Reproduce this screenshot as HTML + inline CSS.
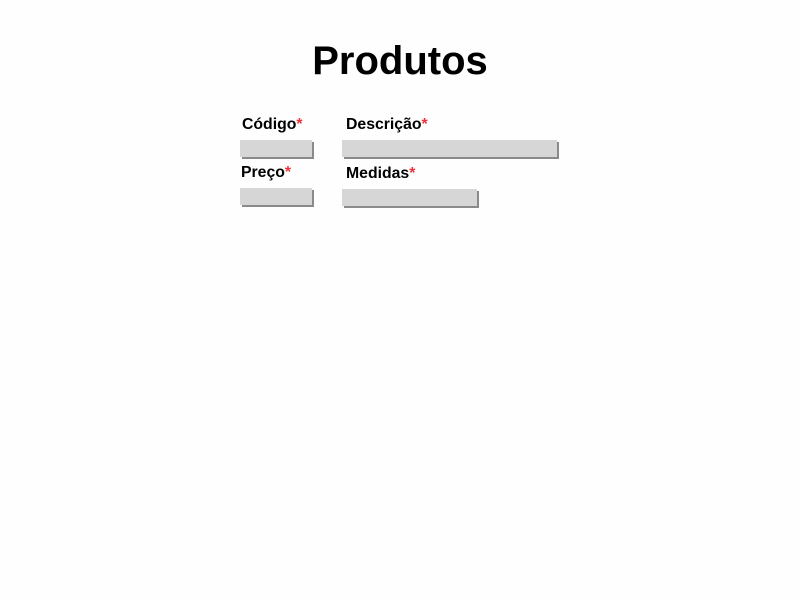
<!DOCTYPE html>
<html><head><meta charset="utf-8"><style>
body{margin:0;width:800px;height:600px;background:#fefefe;font-family:"Liberation Sans",sans-serif;position:relative;overflow:hidden}
h1{position:absolute;top:38px;left:0;width:800px;text-align:center;margin:0;font-size:40px;line-height:46px;font-weight:bold;color:#000}
.l{position:absolute;font-size:15.8px;font-weight:bold;color:#000;line-height:18px}
.l span{color:#f0303a}
.i{position:absolute;height:17px;background:#d6d6d6;box-shadow:2px 2px 0 #8a8a8a}
</style></head><body>
<h1>Produtos</h1>
<div class="l" style="left:242px;top:116px">Código<span>*</span></div>
<div class="l" style="left:346px;top:116px">Descrição<span>*</span></div>
<div class="i" style="left:240px;top:140px;width:72px"></div>
<div class="i" style="left:342px;top:140px;width:215px"></div>
<div class="l" style="left:241px;top:164px">Preço<span>*</span></div>
<div class="l" style="left:346px;top:165px">Medidas<span>*</span></div>
<div class="i" style="left:240px;top:188px;width:72px"></div>
<div class="i" style="left:342px;top:189px;width:135px"></div>
</body></html>
